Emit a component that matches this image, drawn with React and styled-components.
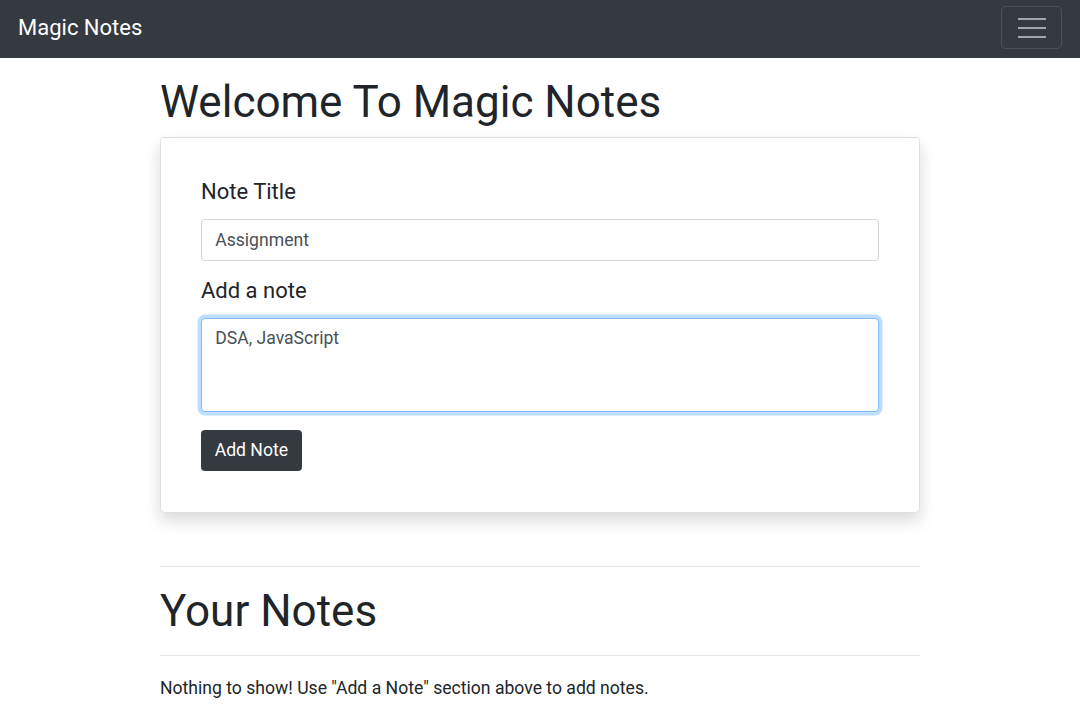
import styled, { createGlobalStyle } from 'styled-components';

const GlobalStyle = createGlobalStyle`
	* {
		box-sizing: border-box;
	}
	body {
		margin: 0;
		font-family: Roboto, 'Liberation Sans', sans-serif;
		font-size: 17.6px;
		color: #212529;
		background: #ffffff;
	}
`;

export default function App() {
	return (
		<>
			<GlobalStyle />
			<NavBar>
				<Brand>Magic Notes</Brand>
				<Toggler aria-label="menu">
					<span />
					<span />
					<span />
				</Toggler>
			</NavBar>
			<Container>
				<Title>Welcome To Magic Notes</Title>
				<Card>
					<Field>
						<Label>Note Title</Label>
						<Input defaultValue="Assignment" />
					</Field>
					<Field>
						<Label>Add a note</Label>
						<TextArea focused defaultValue="DSA, JavaScript" />
					</Field>
					<Button>Add Note</Button>
				</Card>
				<Divider />
				<Title>Your Notes</Title>
				<Divider small />
				<Empty>Nothing to show! Use "Add a Note" section above to add notes.</Empty>
			</Container>
		</>
	);
}

const NavBar = styled.nav`
	height: 58px;
	background-color: #343a40;
	display: flex;
	align-items: center;
	justify-content: space-between;
	padding: 0 18px;
`;

const Brand = styled.a`
	color: #ffffff;
	font-size: 22px;
	line-height: 1.5;
	margin-top: -3px;
`;

const Toggler = styled.button`
	align-self: flex-start;
	margin-top: 6px;
	width: 61px;
	height: 43px;
	background: transparent;
	border: 1px solid rgba(255, 255, 255, 0.12);
	border-radius: 5px;
	display: flex;
	flex-direction: column;
	align-items: center;
	justify-content: center;
	gap: 7px;
	padding: 0;

	span {
		display: block;
		width: 28px;
		height: 2px;
		background: rgba(255, 255, 255, 0.55);
	}
`;

const Container = styled.main`
	width: 760px;
	margin: 0 auto;
	padding-top: 17.6px;
`;

const Title = styled.h1`
	margin: 0 0 9px;
	font-size: 44px;
	font-weight: 400;
	line-height: 1.2;
`;

const Card = styled.div`
	margin-top: 1px;
	border: 1px solid rgba(0, 0, 0, 0.125);
	border-radius: 4px;
	box-shadow: 0 8px 16px rgba(0, 0, 0, 0.15);
	padding: 41px 40px 41px;
	display: flex;
	flex-direction: column;
	align-items: flex-start;
`;

const Field = styled.div`
	width: 100%;
	margin-bottom: 17.6px;
`;

const Label = styled.label`
	display: block;
	font-size: 22px;
	line-height: 26.4px;
	margin-bottom: 13px;
`;

const Input = styled.input`
	width: 100%;
	height: 41.8px;
	padding: 6.6px 13.2px;
	font-family: inherit;
	font-size: 17.6px;
	color: #495057;
	border: 1px solid #ced4da;
	border-radius: 4px;
	outline: none;
`;

const TextArea = styled.textarea`
	display: block;
	width: 100%;
	height: 94.4px;
	padding: 6.6px 13.2px;
	font-family: inherit;
	font-size: 17.6px;
	line-height: 1.5;
	color: #495057;
	border: 1px solid ${(p) => (p.focused ? '#80bdff' : '#ced4da')};
	box-shadow: ${(p) => (p.focused ? '0 0 0 3.5px rgba(0, 123, 255, 0.25)' : 'none')};
	border-radius: 4px;
	outline: none;
	resize: none;
`;

const Button = styled.button`
	height: 41.8px;
	padding: 0 13.7px;
	background-color: #343a40;
	color: #ffffff;
	border: none;
	border-radius: 4px;
	font-family: inherit;
	font-size: 17.6px;
`;

const Divider = styled.hr`
	margin: ${(p) => (p.small ? '16.6px 0 19px' : '53px 0 18px')};
	border: 0;
	border-top: 1px solid rgba(0, 0, 0, 0.1);
`;

const Empty = styled.p`
	margin: 0;
	font-size: 17.6px;
	line-height: 1.5;
`;
